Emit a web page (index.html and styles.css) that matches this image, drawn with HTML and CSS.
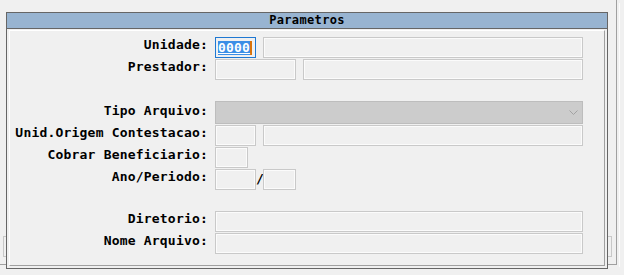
FILE: index.html
```html
<!DOCTYPE html>
<html lang="pt">
<head>
<meta charset="UTF-8">
<title>Parametros</title>
<link rel="stylesheet" href="styles.css">
</head>
<body>
<!-- janela de tras, quase toda coberta pelo dialogo -->
<div class="desk"><div class="desk-field"></div></div>

<div class="dialog">
  <div class="title">Parametros</div>
  <div class="dialog-body">
    <div class="panel">
      <div class="row">
        <label>Unidade:</label>
        <div class="fields">
          <div class="field focus w41"><span class="sel">0000</span></div>
          <input class="field grow" type="text">
        </div>
      </div>
      <div class="row">
        <label>Prestador:</label>
        <div class="fields">
          <input class="field w81" type="text">
          <input class="field grow" type="text">
        </div>
      </div>
      <div class="row blank"></div>
      <div class="row tall">
        <label>Tipo Arquivo:</label>
        <div class="fields">
          <div class="select grow">
            <svg width="9" height="5" viewBox="0 0 9 5"><polyline points="0.5,0.5 4.5,4.5 8.5,0.5" fill="none" stroke="#a2a2a2" stroke-width="1"/></svg>
          </div>
        </div>
      </div>
      <div class="row">
        <label>Unid.Origem Contestacao:</label>
        <div class="fields">
          <input class="field w41" type="text">
          <input class="field grow" type="text">
        </div>
      </div>
      <div class="row">
        <label>Cobrar Beneficiario:</label>
        <div class="fields">
          <input class="field w33" type="text">
        </div>
      </div>
      <div class="row">
        <label>Ano/Periodo:</label>
        <div class="fields">
          <input class="field w41" type="text">
          <span class="slash">/</span>
          <input class="field w33" type="text">
        </div>
      </div>
      <div class="row blank"></div>
      <div class="row">
        <label>Diretorio:</label>
        <div class="fields">
          <input class="field grow" type="text">
        </div>
      </div>
      <div class="row">
        <label>Nome Arquivo:</label>
        <div class="fields">
          <input class="field grow" type="text">
        </div>
      </div>
    </div>
  </div>
</div>
</body>
</html>
```

FILE: styles.css
```css
body { margin: 0; padding: 0; background: #f0f0f0; font-family: "DejaVu Sans Mono", monospace; font-weight: bold; font-size: 13px; letter-spacing: 0.2px; color: #000; }

.desk { position: absolute; left: -1px; top: -1px; width: 616px; height: 264px; border: 1px solid #a0a0a0; box-shadow: 3px 3px 0 -1px #f0f0f0, 4px 3px 0 -1px #fcfcfc; }
.desk-field { position: absolute; left: 3px; top: 236px; width: 607px; height: 19px; border: 1px solid #c8c8c8; }

.dialog { position: relative; margin: 12px 0 0 6px; width: 600px; border: 1px solid #666; background: #f0f0f0; }
.title { height: 15px; line-height: 15px; background: #98b4d1; border-bottom: 1px solid #666; text-align: center; font-size: 12px; letter-spacing: 0.35px; }
.dialog-body { padding: 1px 2px 2px 2px; }
.panel { border: 1px solid; border-color: #fff #a0a0a0 #a0a0a0 #fff; padding: 6px 21px 10px 0; }

.row { display: flex; gap: 7px; height: 22px; }
.row.blank { height: 20px; }
.row.tall { height: 24px; }
.row label { width: 198px; flex: none; text-align: right; line-height: 15px; }
.row.tall label { padding-top: 2px; }
.fields { display: flex; gap: 7px; width: 368px; }

.field { box-sizing: border-box; height: 21px; margin: 0; padding: 0; border: 1px solid #c9c9c9; box-shadow: inset 0 0 0 1px #fbfbfb; background: #f0f0f0; font: inherit; outline: none; }
.grow { flex: 1; min-width: 0; }
.w41 { width: 41px; }
.w81 { width: 81px; }
.w33 { width: 33px; }

.focus { border-color: #1f78d2; box-shadow: none; padding: 2px 0 0 2px; }
.sel { display: inline-block; height: 14px; line-height: 14px; background: #3b8ee6; color: #fff; text-decoration: underline; border-right: 2px solid #d8720a; }

.slash { flex: none; width: 7px; margin: 0 -7px; padding-top: 2px; line-height: 15px; text-align: center; letter-spacing: 0; }
.select { box-sizing: border-box; height: 23px; background: #cccccc; border: 1px solid #bdbdbd; display: flex; justify-content: flex-end; align-items: center; padding-right: 4px; }
```
